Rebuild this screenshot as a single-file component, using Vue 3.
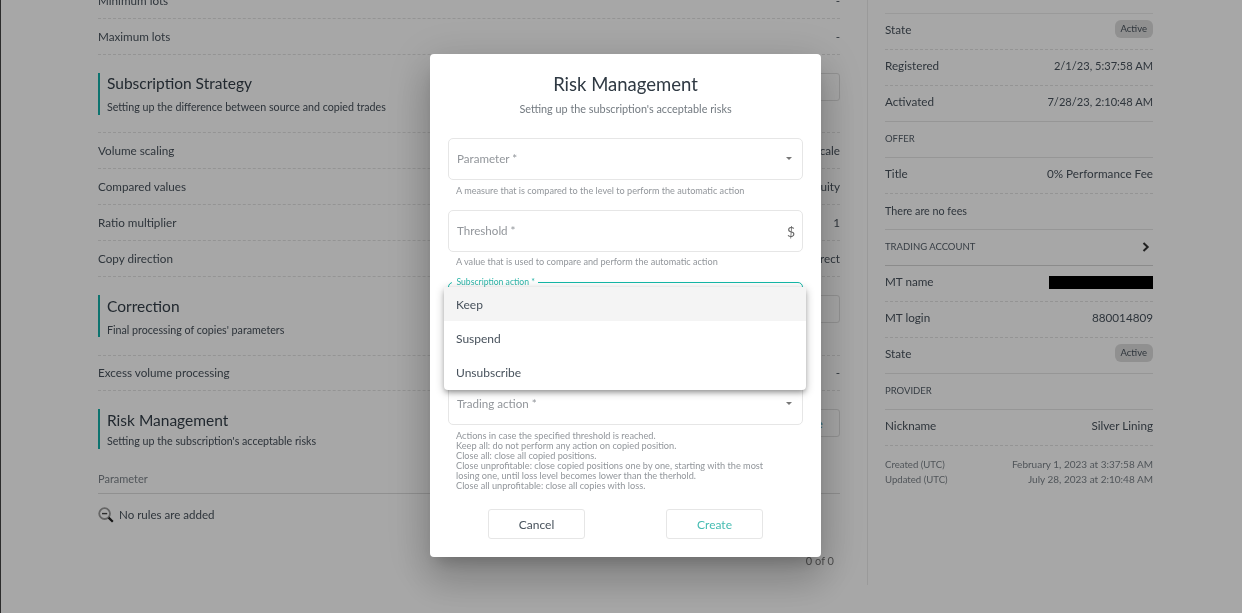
<script setup>
const topRows = [['Minimum lots', '-'], ['Maximum lots', '-']]
const strategyRows = [['Volume scaling', 'Scale'], ['Compared values', 'Equity'], ['Ratio multiplier', '1'], ['Copy direction', 'Direct']]
const side = [
  { k: 'State', badge: 'Active' },
  { k: 'Registered', v: '2/1/23, 5:37:58 AM', date: true },
  { k: 'Activated', v: '7/28/23, 2:10:48 AM', date: true, solid: true },
  { head: 'OFFER', solid: true },
  { k: 'Title', v: '0% Performance Fee' },
  { note: 'There are no fees', solid: true },
  { head: 'TRADING ACCOUNT', chev: true, solid: true, strong: true },
  { k: 'MT name', redacted: true },
  { k: 'MT login', v: '880014809' },
  { k: 'State', badge: 'Active', solid: true },
  { head: 'PROVIDER', solid: true },
  { k: 'Nickname', v: 'Silver Lining' }
]
const helpLines = [
  'Actions in case the specified threshold is reached.',
  'Keep all: do not perform any action on copied position.',
  'Close all: close all copied positions.',
  'Close unprofitable: close copied positions one by one, starting with the most losing one, until loss level becomes lower than the therhold.',
  'Close all unprofitable: close all copies with loss.'
]
const menu = ['Keep', 'Suspend', 'Unsubscribe']
</script>

<template>
  <div class="page">
    <main class="left">
      <div v-for="r in topRows" :key="r[0]" class="row"><span>{{ r[0] }}</span><span>{{ r[1] }}</span></div>

      <section class="sec first">
        <div class="sec-text"><h3>Subscription Strategy</h3><p>Setting up the difference between source and copied trades</p></div>
        <button class="ghost">Change</button>
      </section>
      <div v-for="r in strategyRows" :key="r[0]" class="row"><span>{{ r[0] }}</span><span>{{ r[1] }}</span></div>

      <section class="sec">
        <div class="sec-text"><h3>Correction</h3><p>Final processing of copies' parameters</p></div>
        <button class="ghost">Change</button>
      </section>
      <div class="row short"><span>Excess volume processing</span><span>-</span></div>

      <section class="sec last">
        <div class="sec-text"><h3>Risk Management</h3><p>Setting up the subscription's acceptable risks</p></div>
        <button class="ghost teal">Create</button>
      </section>
      <div class="thead">Parameter</div>
      <div class="empty">
        <svg width="16" height="16" viewBox="0 0 16 16" fill="none">
          <circle cx="6.6" cy="6.6" r="5.4" stroke="#9a9a9a" stroke-width="1.8" />
          <path d="M4 6.6h5.2" stroke="#444" stroke-width="1.4" />
          <path d="M10.6 10.6l4.2 4.2" stroke="#222" stroke-width="2.2" />
        </svg>
        <span>No rules are added</span>
      </div>
      <div class="count">0 of 0</div>
    </main>

    <aside class="side">
      <div v-for="(s, i) in side" :key="i" class="srow" :class="{ solid: s.solid, strong: s.strong }">
        <template v-if="s.k">
          <span>{{ s.k }}</span>
          <span v-if="s.badge" class="badge">{{ s.badge }}</span>
          <span v-else-if="s.redacted" class="redacted"></span>
          <span v-else :class="{ date: s.date }">{{ s.v }}</span>
        </template>
        <span v-else-if="s.head" class="shead">{{ s.head }}</span>
        <span v-else class="snote">{{ s.note }}</span>
        <svg v-if="s.chev" class="chev" width="8" height="10" viewBox="0 0 8 10"><path d="M1.5 1l4.2 4-4.2 4" fill="none" stroke="#333" stroke-width="2" /></svg>
      </div>
      <div class="meta">
        <div><span class="mk">Created (UTC)</span><span>February 1, 2023 at 3:37:58 AM</span></div>
        <div><span class="mk">Updated (UTC)</span><span>July 28, 2023 at 2:10:48 AM</span></div>
      </div>
    </aside>
  </div>

  <div class="overlay"></div>

  <div class="modal">
    <h2>Risk Management</h2>
    <p class="sub">Setting up the subscription's acceptable risks</p>

    <div class="field"><span class="ph">Parameter *</span><i class="caret"></i></div>
    <p class="help">A measure that is compared to the level to perform the automatic action</p>

    <div class="field second"><span class="ph">Threshold *</span><span class="dollar">$</span></div>
    <p class="help tight">A value that is used to compare and perform the automatic action</p>

    <div class="field focus">
      <span class="float">Subscription action *</span>
      <i class="caret"></i>
    </div>

    <div class="field trading"><span class="ph">Trading action *</span><i class="caret"></i></div>
    <div class="long">
      <div v-for="l in helpLines" :key="l">{{ l }}</div>
    </div>

    <div class="actions">
      <button class="btn">Cancel</button>
      <button class="btn create">Create</button>
    </div>

    <ul class="menu">
      <li v-for="(m, i) in menu" :key="m" :class="{ on: i === 0 }">{{ m }}</li>
    </ul>
  </div>
</template>

<style>
html, body { margin: 0; height: 100%; overflow: hidden; background: #fff; }
</style>

<style scoped>
* { box-sizing: border-box; }
.page {
  width: 1242px; height: 613px; overflow: hidden; display: flex; align-items: flex-start;
  background: #fff; color: #48525c;
  border-left: 1px solid #444; padding-left: 97px;
  font-family: "Lato", "Noto Sans", sans-serif; font-size: 11.7px;
  filter: blur(0.3px);
}
.left { width: 742px; height: 602px; margin-top: -17px; flex: none; display: flex; flex-direction: column; }
.row { height: 36px; flex: none; display: flex; align-items: center; justify-content: space-between; padding-bottom: 2px; border-bottom: 1px dashed #e2e2e2; }
.row.short { height: 35px; }
.sec { flex: none; margin-top: 18px; padding-bottom: 18px; border-bottom: 1px dashed #e2e2e2; display: flex; justify-content: space-between; align-items: flex-start; }
.sec.first { padding-bottom: 17px; }
.sec.last { border-bottom: 0; padding-bottom: 0; }
.sec-text { border-left: 2px solid #14b0aa; height: 42px; padding-left: 7px; }
.sec.last .sec-text { height: 40px; }
.sec h3 { margin: 1px 0 0; font-size: 15.5px; line-height: 20px; font-weight: 400; color: #333e48; }
.sec.first h3 { margin-top: 0; }
.sec p { margin: 7px 0 0; font-size: 10.7px; line-height: 14px; color: #454f59; }
.sec.last p { margin-top: 4px; }
.ghost { width: 100px; height: 28px; background: #fff; border: 1px solid #e0e0e0; border-radius: 3px; font: inherit; color: #48525c; text-align: right; padding: 0 25px 0 0; }
.ghost.teal { color: #1c8fb0; padding-right: 16px; }
.thead { flex: none; margin-top: 20px; height: 25px; line-height: 20px; font-size: 11px; color: #7c838a; border-bottom: 1px solid #dcdcdc; }
.empty { flex: none; height: 41px; display: flex; align-items: center; gap: 5px; font-size: 11.55px; }
.count { margin-top: auto; margin-bottom: 17px; align-self: flex-end; padding-right: 6px; font-size: 11px; color: #777; line-height: 14px; }

.side { margin-left: 27px; width: 286px; height: 585px; padding: 14px 0 0 17px; border-left: 1px solid #ebebeb; flex: none; }
.srow { height: 36px; display: flex; align-items: center; justify-content: space-between; padding-bottom: 5px; border-bottom: 1px dashed #e2e2e2; }
.srow:first-child { box-shadow: 0 -1px 0 #ececec; }
.srow.solid { border-bottom: 1px solid #e6e6e6; }
.srow.strong { border-bottom: 1px solid #d4d4d4; }
.date { font-size: 11.1px; }
.shead { font-size: 9.5px; color: #56606a; margin-top: 3px; }
.snote { font-size: 10.75px; margin-top: 2px; }
.chev { margin: 3px 3px 0 0; }
.badge { height: 18px; padding: 0 6px; border-radius: 6px; background: #dcdcdc; font-size: 9.5px; line-height: 18px; color: #48525c; }
.redacted { width: 104px; height: 13px; background: #000; margin-top: 3px; }
.meta { margin-top: 11px; font-size: 10px; line-height: 15px; color: #7c838a; }
.meta div { display: flex; justify-content: space-between; }
.mk { font-size: 9.6px; }

.overlay { position: fixed; inset: 0; background: rgba(0, 0, 0, 0.345); }

.modal {
  position: fixed; left: 430px; top: 54px; width: 391px; height: 503px; padding: 0 18px;
  background: #fff; border-radius: 4px; color: #48525c;
  font-family: "Lato", "Noto Sans", sans-serif;
  box-shadow: 0 11px 15px -7px rgba(0,0,0,.2), 0 24px 38px 3px rgba(0,0,0,.14), 0 9px 46px 8px rgba(0,0,0,.12);
  filter: blur(0.25px);
}
h2 { margin: 18px 0 0; font-size: 18.5px; line-height: 24px; font-weight: 400; text-align: center; color: #2f3943; }
.sub { margin: 6px 0 0; font-size: 10.85px; line-height: 14px; text-align: center; color: #737a80; }
.field { position: relative; height: 42px; border: 1px solid #e6e6e6; border-radius: 5px; margin-top: 22px; display: flex; align-items: center; padding: 0 8px 2px; justify-content: space-between; }
.field.second { margin-top: 13px; }
.ph { font-size: 11.6px; color: #92969b; }
.caret { width: 0; height: 0; border-left: 3.5px solid transparent; border-right: 3.5px solid transparent; border-top: 3.5px solid #777; margin-right: 2.5px; }
.dollar { font-size: 14px; color: #666; margin: 3px -1px 0 0; }
.help { margin: 5px 8px 0; font-size: 9.15px; line-height: 12px; color: #92969b; }
.help.tight { margin-top: 4px; }
.field.focus { margin-top: 14px; border: 1.5px solid #14b8a8; }
.float { position: absolute; left: 3px; top: -7px; padding: 0 3px 0 4.5px; background: #fff; font-size: 8.6px; line-height: 12px; color: #2cb5a8; }
.field.trading { margin-top: 59px; }
.long { margin: 6px 27px 0 8px; font-size: 9.2px; line-height: 10.1px; color: #92969b; }
.actions { position: absolute; left: 58px; right: 58px; top: 455px; display: flex; justify-content: space-between; }
.btn { width: 97px; height: 30px; background: #fff; border: 1px solid #e6e6e6; border-radius: 3px; font: inherit; font-size: 12px; color: #48525c; }
.btn.create { color: #45bcb2; }
.menu {
  position: absolute; left: 14px; top: 233px; width: 362px; margin: 0; padding: 0; list-style: none;
  background: #fff; border-radius: 4px; font-size: 12px;
  box-shadow: 0 3px 5px -1px rgba(0,0,0,.3), 0 2px 8px 1px rgba(0,0,0,.2);
}
.menu li { height: 34.4px; display: flex; align-items: center; padding: 0 12px; color: #48525c; }
.menu li.on { background: #f4f4f4; }
</style>
